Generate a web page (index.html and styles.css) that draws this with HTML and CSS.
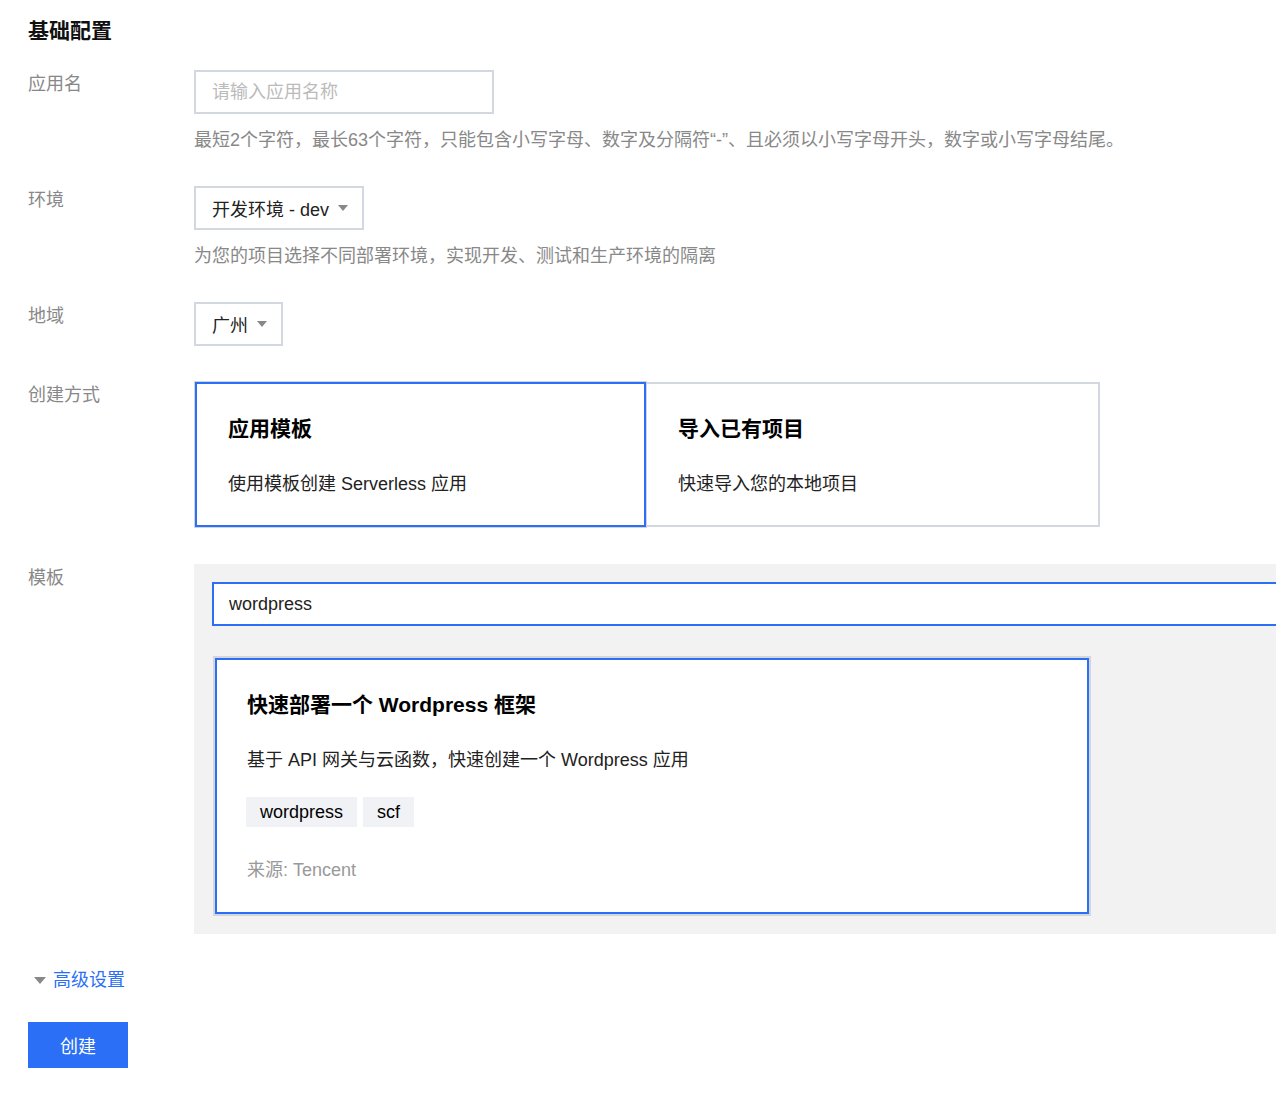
FILE: index.html
```html
<!DOCTYPE html>
<html lang="zh-CN">
<head>
<meta charset="utf-8">
<title>基础配置</title>
<link rel="stylesheet" href="styles.css">
</head>
<body>
<div class="page">
  <h2 class="section-title">基础配置</h2>

  <div class="form-row">
    <div class="label">应用名</div>
    <div class="control">
      <input class="text-input" type="text" placeholder="请输入应用名称">
      <p class="help">最短2个字符，最长63个字符，只能包含小写字母、数字及分隔符“-”、且必须以小写字母开头，数字或小写字母结尾。</p>
    </div>
  </div>

  <div class="form-row">
    <div class="label">环境</div>
    <div class="control">
      <div class="select"><span>开发环境 - dev</span><i class="caret"></i></div>
      <p class="help">为您的项目选择不同部署环境，实现开发、测试和生产环境的隔离</p>
    </div>
  </div>

  <div class="form-row form-row--wide-gap">
    <div class="label">地域</div>
    <div class="control">
      <div class="select"><span>广州</span><i class="caret"></i></div>
    </div>
  </div>

  <div class="form-row form-row--wider-gap">
    <div class="label">创建方式</div>
    <div class="control">
      <div class="mode-cards">
        <div class="mode-card is-active">
          <div class="card-title">应用模板</div>
          <div class="card-desc">使用模板创建 Serverless 应用</div>
        </div>
        <div class="mode-card mode-card--plain">
          <div class="card-title">导入已有项目</div>
          <div class="card-desc">快速导入您的本地项目</div>
        </div>
      </div>
    </div>
  </div>

  <div class="form-row form-row--last">
    <div class="label">模板</div>
    <div class="control">
      <div class="template-panel">
        <input class="search-input" type="text" value="wordpress">
        <div class="tpl-card">
          <div class="card-title">快速部署一个 Wordpress 框架</div>
          <div class="tpl-desc">基于 API 网关与云函数，快速创建一个 Wordpress 应用</div>
          <div class="tags">
            <span class="tag">wordpress</span>
            <span class="tag">scf</span>
          </div>
          <div class="tpl-source">来源: Tencent</div>
        </div>
      </div>
    </div>
  </div>

  <div class="advanced"><i class="adv-caret"></i><span>高级设置</span></div>

  <button class="btn-primary" type="button">创建</button>
</div>
</body>
</html>
```

FILE: styles.css
```css
* {
  box-sizing: border-box;
}

html, body {
  margin: 0;
  background: #fff;
}

body {
  font-family: "Liberation Sans", "Noto Sans CJK SC", sans-serif;
  font-size: 18px;
  color: #222;
}

.page {
  width: 1276px;
  height: 1096px;
  overflow: hidden;
  padding: 16px 0 0 28px;
}

.section-title {
  margin: 0 0 24px;
  font-size: 21px;
  line-height: 30px;
  font-weight: 700;
  color: #111;
}

.form-row {
  display: flex;
  margin-bottom: 33px;
}

.form-row--wide-gap {
  margin-bottom: 35px;
}

.form-row--wider-gap {
  margin-bottom: 36px;
}

.form-row--last {
  margin-bottom: 0;
}

.label {
  width: 166px;
  flex: none;
  padding-top: 1px;
  line-height: 26px;
  color: #888;
}

.control {
  flex: 1;
  min-width: 0;
}

.text-input {
  display: block;
  width: 300px;
  height: 44px;
  margin: 0;
  border: 2px solid #d3d8e0;
  padding: 0 16px;
  font: inherit;
  color: #222;
  outline: none;
  background: #fff;
}

.text-input::placeholder {
  color: #bbb;
}

.help {
  margin: 13px 0 0;
  line-height: 26px;
  color: #888;
  white-space: nowrap;
}

.select {
  display: inline-flex;
  align-items: center;
  gap: 9px;
  height: 44px;
  border: 2px solid #d3d8e0;
  padding: 0 14px 0 16px;
  color: #222;
  background: #fff;
  vertical-align: top;
}

.caret {
  width: 0;
  height: 0;
  border-left: 5px solid transparent;
  border-right: 5px solid transparent;
  border-top: 6px solid #888;
}

.mode-cards {
  display: flex;
  align-items: center;
}

.mode-card {
  width: 453px;
  height: 147px;
  padding: 33px 33px 0;
  border: 1px solid #cfd4dc;
  background: #fff;
}

.mode-card.is-active {
  position: relative;
  z-index: 1;
  box-shadow: inset 0 0 0 2px #2a6ff5;
}

.mode-card--plain {
  width: 455px;
  height: 145px;
  margin-left: -2px;
  padding: 31px 31px 0;
  border: 2px solid #d3d8e0;
}

.card-title {
  font-size: 21px;
  line-height: 28px;
  font-weight: 700;
  color: #000;
}

.card-desc {
  margin-top: 28px;
  line-height: 26px;
  color: #222;
}

.template-panel {
  width: 1120px;
  background: #f2f2f2;
  padding: 18px;
}

.search-input {
  display: block;
  width: 100%;
  height: 44px;
  margin: 0;
  border: 2px solid #2a6ff5;
  padding: 0 15px;
  font: inherit;
  color: #222;
  background: #fff;
  outline: none;
}

.tpl-card {
  width: 878px;
  margin: 30px 0 0 1px;
  border: 2px solid #d3d6db;
  box-shadow: inset 0 0 0 2px #2a6ff5;
  background: #fff;
  padding: 33px 32px 31px;
}

.tpl-desc {
  margin-top: 28px;
  line-height: 26px;
  color: #222;
}

.tags {
  display: flex;
  gap: 6px;
  margin-top: 24px;
  margin-left: -1px;
}

.tag {
  height: 30px;
  line-height: 31px;
  padding: 0 14px;
  background: #f1f2f6;
  color: #000;
}

.tpl-source {
  margin-top: 30px;
  line-height: 26px;
  color: #999;
}

.advanced {
  display: flex;
  align-items: center;
  margin-top: 33px;
  line-height: 26px;
  color: #2a6ff5;
}

.adv-caret {
  width: 0;
  height: 0;
  margin: 0 7px 0 6px;
  border-left: 6px solid transparent;
  border-right: 6px solid transparent;
  border-top: 7px solid #888;
}

.btn-primary {
  display: block;
  width: 100px;
  height: 46px;
  margin-top: 29px;
  border: none;
  padding: 0;
  background: #2a6ff5;
  color: #fff;
  font: inherit;
  cursor: pointer;
}
```
